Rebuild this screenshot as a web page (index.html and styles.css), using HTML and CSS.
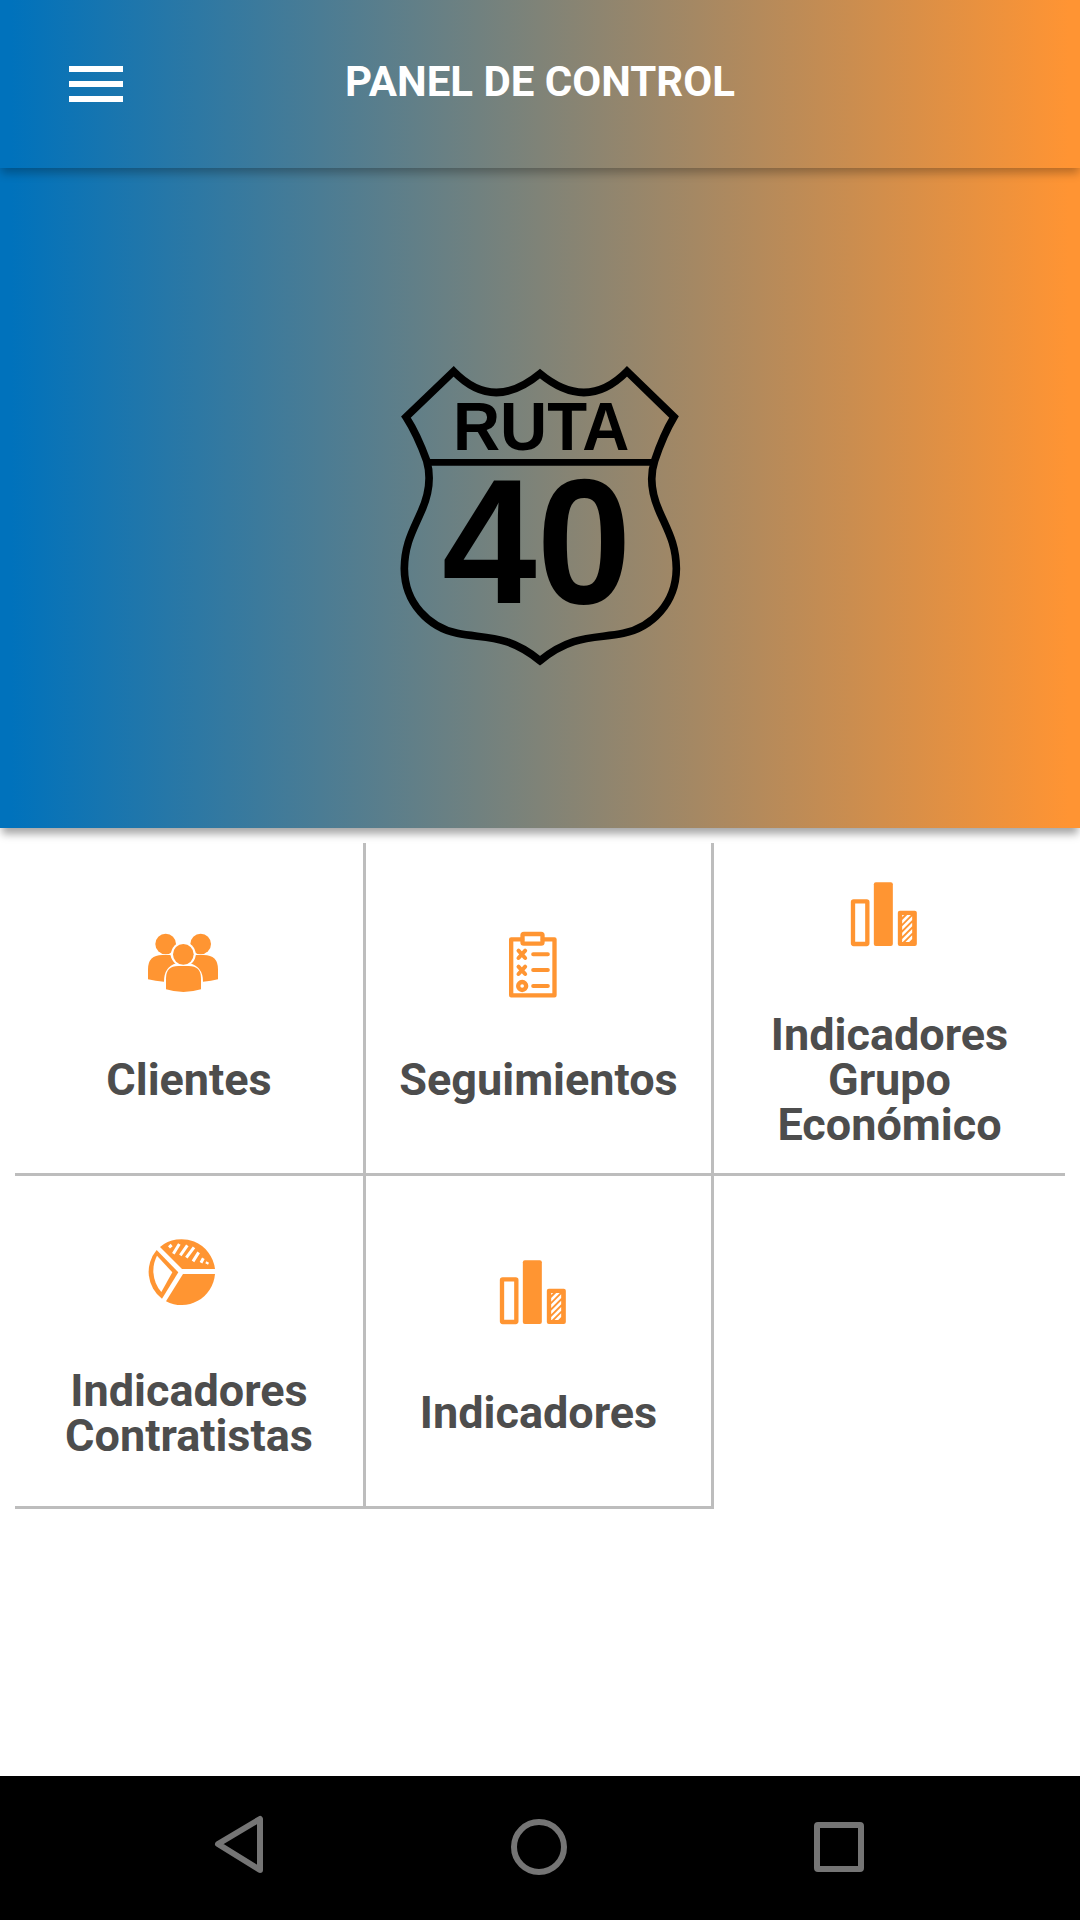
FILE: index.html
```
<!DOCTYPE html>
<html lang="es">
<head>
    <meta charset="UTF-8">
    <meta name="viewport" content="width=device-width, initial-scale=1.0">
    <title>Panel de control</title>
    <link rel="stylesheet" href="styles.css">
</head>
<body>
    <header class="toolbar">
        <button class="menu-button" aria-label="Menú">
            <span></span>
            <span></span>
            <span></span>
        </button>
        <h1>PANEL DE CONTROL</h1>
    </header>

    <section class="hero">
        <svg class="logo" viewBox="0 0 960 1020">
            <path d="M221 94 Q340 217 480 101 Q620 217 741 94 L882 231 Q850 284 824 362 C808 410 814 460 838 514 C862 570 888 610 889 686 C888 790 815 862 730 880 C650 897 580 880 480 962 C380 880 312 897 232 880 C147 862 74 790 73 686 C74 610 100 570 124 514 C148 460 154 410 140 362 Q112 284 78 231 Z" fill="none" stroke="#000" stroke-width="23"/>
            <path d="M140 367 H822" stroke="#000" stroke-width="20"/>
            <text x="219" y="331" font-size="206" textLength="529" lengthAdjust="spacingAndGlyphs">RUTA</text>
            <text x="186" y="788" font-size="534" textLength="568" lengthAdjust="spacingAndGlyphs">40</text>
        </svg>
    </section>

    <main class="grid">
        <a class="cell">
            <svg class="icon" viewBox="24 12 270 270">
                <g fill="#ff9532">
                    <circle cx="107" cy="102" r="31"/>
                    <circle cx="212" cy="102" r="31"/>
                    <path d="M54 208 V178 Q54 135 97 135 H121 Q126 152 139 160 Q102 170 102 215 Q76 214 54 208 Z"/>
                    <path d="M264 208 V178 Q264 135 221 135 H197 Q192 152 179 160 Q219 170 219 215 Q244 214 264 208 Z"/>
                    <circle cx="160" cy="133" r="37" fill="#fff"/>
                    <circle cx="160" cy="133" r="31"/>
                    <path d="M108 238 V205 Q108 168 145 168 H176 Q213 168 213 205 V238 Q160 254 108 238 Z"/>
                </g>
            </svg>
            <span class="label">Clientes</span>
        </a>

        <a class="cell">
            <svg class="icon" viewBox="-7.5 12 270 270">
                <g fill="none" stroke="#ff9532" stroke-width="13" stroke-linecap="round" stroke-linejoin="round">
                    <path d="M98 88 H65 V256 H195 V88 H160"/>
                    <rect x="99" y="72" width="60" height="29" rx="4"/>
                    <path d="M87 122 L107 144 M107 122 L87 144 M87 170 L107 192 M107 170 L87 192" stroke-width="12"/>
                    <path d="M131 133 H175 M131 180 H175 M131 228 H175" stroke-width="12"/>
                    <circle cx="98" cy="228" r="12"/>
                </g>
            </svg>
            <span class="label">Seguimientos</span>
        </a>

        <a class="cell">
            <svg class="icon" viewBox="-4.5 -3 270 270">
                <rect x="40.500" y="94" width="43" height="128" rx="2" fill="none" stroke="#ff9532" stroke-width="13"/>
                <rect x="103" y="37" width="57" height="191" rx="6" fill="#ff9532"/>
                <rect x="175" y="122" width="57" height="106" rx="6" fill="#ff9532"/>
                <path d="M188 135 H194 L188 141 Z M203 135 H214 L188 161 V150 Z M218 139 V150 L188 180 V169 Z M218 158 V169 L188 199 V188 Z M218 177 V188 L190 216 H188 V207 Z M218 196 V207 L209 216 H198 Z" fill="#fff"/>
            </svg>
            <span class="label">Indicadores Grupo Económico</span>
        </a>

        <a class="cell">
            <svg class="icon" viewBox="24 15 270 270">
                <g fill="#ff9532">
                    <path d="M90 81 A101 101 0 0 1 255 147 H156 Z"/>
                    <path d="M159 162 H255 A101 101 0 0 1 108 244 Z"/>
                    <path d="M80 90 L145 157 L96 236 A101 101 0 0 1 80 90 Z"/>
                </g>
                <path d="M81 107 L127 157 L94 216 Q73 194 70 157 Q69 130 81 107 Z" fill="#fff"/>
                <path d="M117 82 L125 75 M130 101 L148 72 M151 106 L172 76 M169 113 L192 82 M189 124 L206 97 M213 128 L220 115 M230 132 L233 126" stroke="#fff" stroke-width="9"/>
            </svg>
            <span class="label">Indicadores Contratistas</span>
        </a>

        <a class="cell">
            <svg class="icon" viewBox="-4.5 -3 270 270">
                <rect x="40.500" y="94" width="43" height="128" rx="2" fill="none" stroke="#ff9532" stroke-width="13"/>
                <rect x="103" y="37" width="57" height="191" rx="6" fill="#ff9532"/>
                <rect x="175" y="122" width="57" height="106" rx="6" fill="#ff9532"/>
                <path d="M188 135 H194 L188 141 Z M203 135 H214 L188 161 V150 Z M218 139 V150 L188 180 V169 Z M218 158 V169 L188 199 V188 Z M218 177 V188 L190 216 H188 V207 Z M218 196 V207 L209 216 H198 Z" fill="#fff"/>
            </svg>
            <span class="label">Indicadores</span>
        </a>
    </main>

    <nav class="system-nav">
        <svg viewBox="0 0 56 56">
            <path d="M49 2 V53 L7 27 Z"/>
        </svg>
        <svg viewBox="0 0 56 56">
            <circle cx="28" cy="30" r="25"/>
        </svg>
        <svg viewBox="0 0 56 56">
            <rect x="6" y="8" width="44" height="44" rx="1"/>
        </svg>
    </nav>
</body>
</html>
```
FILE: styles.css
```
body {
    font-family: Roboto, sans-serif;
    background-color: #fff;
    margin: 0;
    display: flex;
    flex-direction: column;
    height: 1920px;
    overflow: hidden;
}

.toolbar,
.hero {
    background: linear-gradient(to right, #0072bc 1%, #ff9433 99%);
}

.toolbar {
    display: grid;
    grid-template-columns: 192px 1fr 192px;
    align-items: center;
    height: 168px;
    box-sizing: border-box;
    box-shadow: 0 6px 9px -1px rgba(0, 0, 0, 0.28);
    position: relative;
    z-index: 1;
}

.toolbar h1 {
    margin: 0 0 4px;
    font-size: 42px;
    line-height: 48px;
    font-weight: bold;
    color: #fff;
    text-align: center;
    white-space: nowrap;
}

.menu-button {
    display: flex;
    flex-direction: column;
    gap: 9px;
    width: 54px;
    padding: 0;
    border: none;
    background: none;
    justify-self: center;
}

.menu-button span {
    height: 6px;
    background-color: #fff;
}

.hero {
    display: flex;
    justify-content: center;
    align-items: center;
    height: 660px;
    padding-top: 24px;
    box-sizing: border-box;
    box-shadow: 0 8px 8px -2px rgba(0, 0, 0, 0.35);
}

.logo {
    width: 320px;
    height: 340px;
}

.logo text {
    font-family: "Liberation Sans", sans-serif;
    font-weight: bold;
}

.grid {
    display: grid;
    grid-template-columns: 351px 348px 351px;
    grid-auto-rows: 333px;
    padding: 15px 15px 0;
    flex-grow: 1;
}

.cell {
    display: flex;
    flex-direction: column;
    align-items: center;
    justify-content: center;
    gap: 53px;
    border-right: 3px solid #bdbdbd;
    border-bottom: 3px solid #bdbdbd;
}

.cell:nth-child(3n) {
    border-right: none;
}

.icon {
    width: 90px;
    height: 90px;
    margin-right: 13px;
}

.label {
    max-width: 300px;
    font-size: 45px;
    line-height: 45px;
    font-weight: bold;
    color: #4d4d4d;
    text-align: center;
}

.system-nav {
    display: flex;
    justify-content: center;
    align-items: center;
    gap: 244px;
    height: 144px;
    padding: 0 2px 6px 0;
    box-sizing: border-box;
    background-color: #000;
}

.system-nav svg {
    width: 56px;
    height: 56px;
    overflow: visible;
    fill: none;
    stroke: #757575;
    stroke-width: 6;
    stroke-linejoin: round;
}
```
